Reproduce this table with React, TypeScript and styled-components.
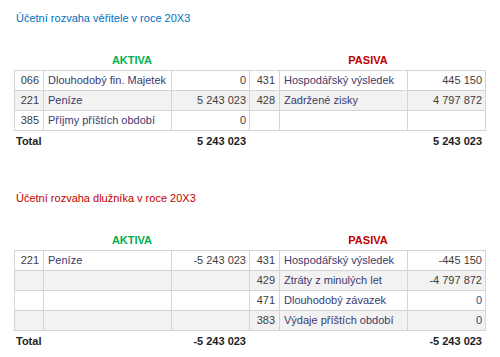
import styled, { createGlobalStyle } from "styled-components";

type Line = { code?: string; name?: string; value?: string; valueBlue?: boolean };

type Sheet = {
  title: string;
  titleColor: string;
  aktiva: Line[];
  pasiva: Line[];
  total: string;
};

const sheets: Sheet[] = [
  {
    title: "Účetní rozvaha věřitele v roce 20X3",
    titleColor: "#0070c0",
    aktiva: [
      { code: "066", name: "Dlouhodobý fin. Majetek", value: "0" },
      { code: "221", name: "Peníze", value: "5 243 023" },
      { code: "385", name: "Příjmy příštích období", value: "0" },
    ],
    pasiva: [
      { code: "431", name: "Hospodářský výsledek", value: "445 150" },
      { code: "428", name: "Zadržené zisky", value: "4 797 872" },
      {},
    ],
    total: "5 243 023",
  },
  {
    title: "Účetní rozvaha dlužníka v roce 20X3",
    titleColor: "#c00000",
    aktiva: [{ code: "221", name: "Peníze", value: "-5 243 023" }, {}, {}, {}],
    pasiva: [
      { code: "431", name: "Hospodářský výsledek", value: "-445 150" },
      { code: "429", name: "Ztráty z minulých let", value: "-4 797 872" },
      { code: "471", name: "Dlouhodobý závazek", value: "0", valueBlue: true },
      { code: "383", name: "Výdaje příštích období", value: "0", valueBlue: true },
    ],
    total: "-5 243 023",
  },
];

export default function App() {
  return (
    <>
      <GlobalStyle />
      <Page>
        {sheets.map((s) => (
          <Section key={s.title}>
            <Title $color={s.titleColor}>{s.title}</Title>
            <HeadRow>
              <SideHead $color="#00b050">AKTIVA</SideHead>
              <SideHead $color="#c00000">PASIVA</SideHead>
            </HeadRow>
            <Table>
              {s.aktiva.map((a, i) => {
                const p = s.pasiva[i] || {};
                return (
                  <Row key={i} $shaded={i % 2 === 1}>
                    <Code>{a.code}</Code>
                    <Name>{a.name}</Name>
                    <Value $blue={a.valueBlue}>{a.value}</Value>
                    <Code>{p.code}</Code>
                    <Name>{p.name}</Name>
                    <Value $blue={p.valueBlue}>{p.value}</Value>
                  </Row>
                );
              })}
            </Table>
            <TotalRow>
              <TotalLabel>Total</TotalLabel>
              <TotalValue>{s.total}</TotalValue>
              <TotalValue>{s.total}</TotalValue>
            </TotalRow>
          </Section>
        ))}
      </Page>
    </>
  );
}

const GlobalStyle = createGlobalStyle`
  body {
    margin: 0;
    background: #ffffff;
    font-family: "Liberation Sans", Arial, sans-serif;
    font-size: 11px;
    color: #333333;
  }
`;

const Page = styled.div`
  padding: 8px 0 0 14px;
  display: flex;
  flex-direction: column;
  gap: 37px;
  width: 472px;
`;

const Section = styled.div`
  display: flex;
  flex-direction: column;
`;

const Title = styled.div<{ $color: string }>`
  height: 20px;
  line-height: 20px;
  padding-left: 2px;
  margin-bottom: 22px;
  color: ${(p) => p.$color};
`;

const HeadRow = styled.div`
  display: grid;
  grid-template-columns: 236px 236px;
  height: 20px;
  line-height: 20px;
`;

const SideHead = styled.div<{ $color: string }>`
  text-align: center;
  font-weight: bold;
  color: ${(p) => p.$color};
`;

const Table = styled.div`
  border-top: 1px solid #d4d4d4;
  border-left: 1px solid #d4d4d4;
`;

const Row = styled.div<{ $shaded: boolean }>`
  display: grid;
  grid-template-columns: 29px 128px 78px 30px 128px 78px;
  height: 20px;
  background: ${(p) => (p.$shaded ? "#f2f2f2" : "#ffffff")};

  & > div {
    border-right: 1px solid #d4d4d4;
    border-bottom: 1px solid #d4d4d4;
    line-height: 19px;
    white-space: nowrap;
    overflow: hidden;
  }
`;

const Code = styled.div`
  text-align: right;
  padding-right: 4px;
  color: #404040;
`;

const Name = styled.div`
  padding-left: 4px;
  color: #3c3a6e;
`;

const Value = styled.div<{ $blue?: boolean }>`
  text-align: right;
  padding-right: 3px;
  color: ${(p) => (p.$blue ? "#2a4f8f" : "#404040")};
`;

const TotalRow = styled.div`
  display: grid;
  grid-template-columns: 157px 78px 236px;
  height: 20px;
  line-height: 20px;
  font-weight: bold;
  color: #222222;
`;

const TotalLabel = styled.div`
  padding-left: 2px;
`;

const TotalValue = styled.div`
  text-align: right;
  padding-right: 3px;
`;
